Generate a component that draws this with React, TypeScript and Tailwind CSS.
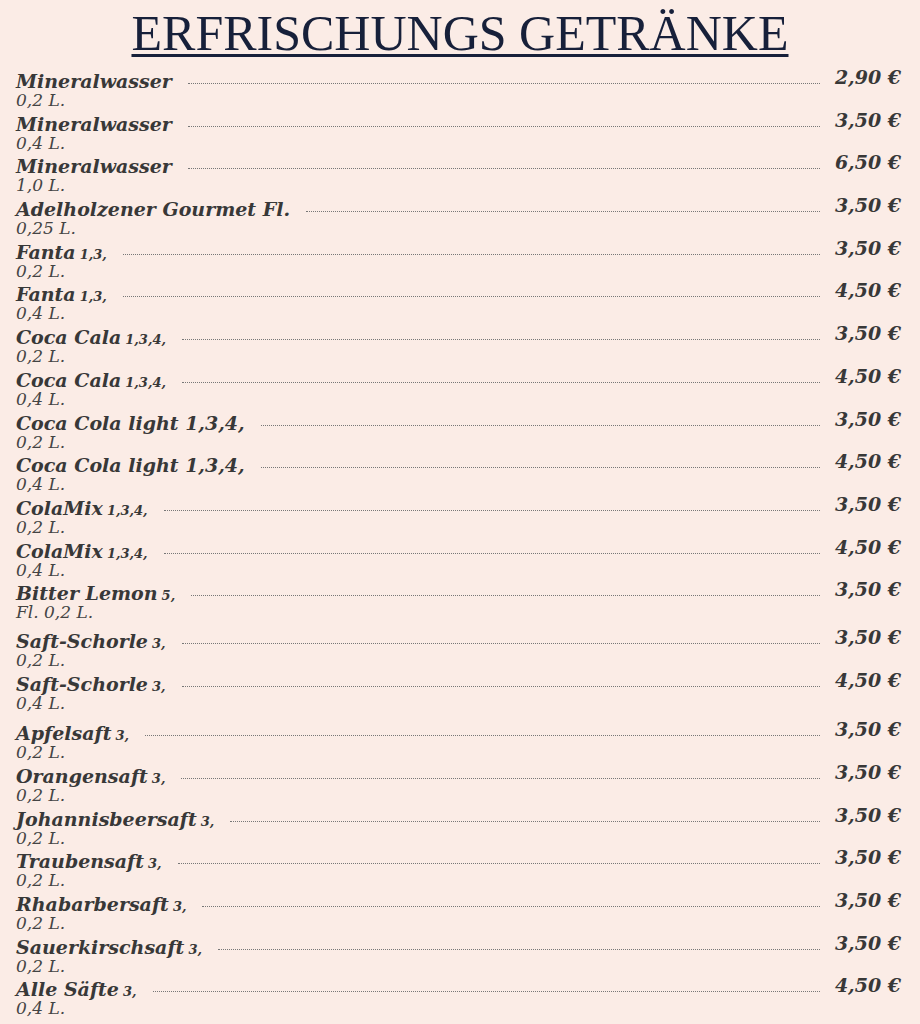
import React from "react";

type Item = { name: string; al?: string; sub: string; price: string; extra?: string };

const items: Item[] = [
  { name: "Mineralwasser", sub: "0,2 L.", price: "2,90 €" },
  { name: "Mineralwasser", sub: "0,4 L.", price: "3,50 €" },
  { name: "Mineralwasser", sub: "1,0 L.", price: "6,50 €" },
  { name: "Adelholzener Gourmet Fl.", sub: "0,25 L.", price: "3,50 €" },
  { name: "Fanta", al: "1,3,", sub: "0,2 L.", price: "3,50 €" },
  { name: "Fanta", al: "1,3,", sub: "0,4 L.", price: "4,50 €" },
  { name: "Coca Cala", al: "1,3,4,", sub: "0,2 L.", price: "3,50 €" },
  { name: "Coca Cala", al: "1,3,4,", sub: "0,4 L.", price: "4,50 €" },
  { name: "Coca Cola light 1,3,4,", sub: "0,2 L.", price: "3,50 €" },
  { name: "Coca Cola light 1,3,4,", sub: "0,4 L.", price: "4,50 €" },
  { name: "ColaMix", al: "1,3,4,", sub: "0,2 L.", price: "3,50 €" },
  { name: "ColaMix", al: "1,3,4,", sub: "0,4 L.", price: "4,50 €" },
  { name: "Bitter Lemon", al: "5,", sub: "Fl. 0,2 L.", price: "3,50 €" },
  { name: "Saft-Schorle", al: "3,", sub: "0,2 L.", price: "3,50 €", extra: "mt-[5px]" },
  { name: "Saft-Schorle", al: "3,", sub: "0,4 L.", price: "4,50 €" },
  { name: "Apfelsaft", al: "3,", sub: "0,2 L.", price: "3,50 €", extra: "mt-[7px]" },
  { name: "Orangensaft", al: "3,", sub: "0,2 L.", price: "3,50 €" },
  { name: "Johannisbeersaft", al: "3,", sub: "0,2 L.", price: "3,50 €" },
  { name: "Traubensaft", al: "3,", sub: "0,2 L.", price: "3,50 €" },
  { name: "Rhabarbersaft", al: "3,", sub: "0,2 L.", price: "3,50 €" },
  { name: "Sauerkirschsaft", al: "3,", sub: "0,2 L.", price: "3,50 €" },
  { name: "Alle Säfte", al: "3,", sub: "0,4 L.", price: "4,50 €" },
];

export default function App() {
  return (
    <div
      className="h-[1024px] overflow-hidden w-[920px] bg-[#fbece6] text-[#383838]"
      style={{ fontFamily: '"DejaVu Serif", "Liberation Serif", serif' }}
    >
      <div className="flex justify-center pt-[8px]">
        <h1
          className="text-[50px] leading-[50px] font-normal text-[#17203a] underline decoration-[3px] underline-offset-[4px]"
          style={{ fontFamily: '"Liberation Serif", serif' }}
        >
          ERFRISCHUNGS GETRÄNKE
        </h1>
      </div>
      <div className="mt-[12px] pl-[16px] pr-[19px]">
        {items.map((it, i) => (
          <div key={i} className={`flex items-start h-[42.7px] ${it.extra ?? ""}`}>
            <div className="flex flex-col">
              <div className="text-[19px] leading-[22px] font-bold italic whitespace-nowrap">
                {it.name}
                {it.al && <span className="text-[13px] leading-[0px] ml-[4px]">{it.al}</span>}
              </div>
              <div className="text-[17px] leading-[16px] italic text-[#444]">{it.sub}</div>
            </div>
            <div className="flex-1 ml-[16px] h-[14px] border-b border-dotted border-[#777]" />
            <div className="w-[81px] text-right text-[19px] leading-[22px] font-bold italic -mt-[4px] whitespace-nowrap">
              {it.price}
            </div>
          </div>
        ))}
      </div>
    </div>
  );
}
